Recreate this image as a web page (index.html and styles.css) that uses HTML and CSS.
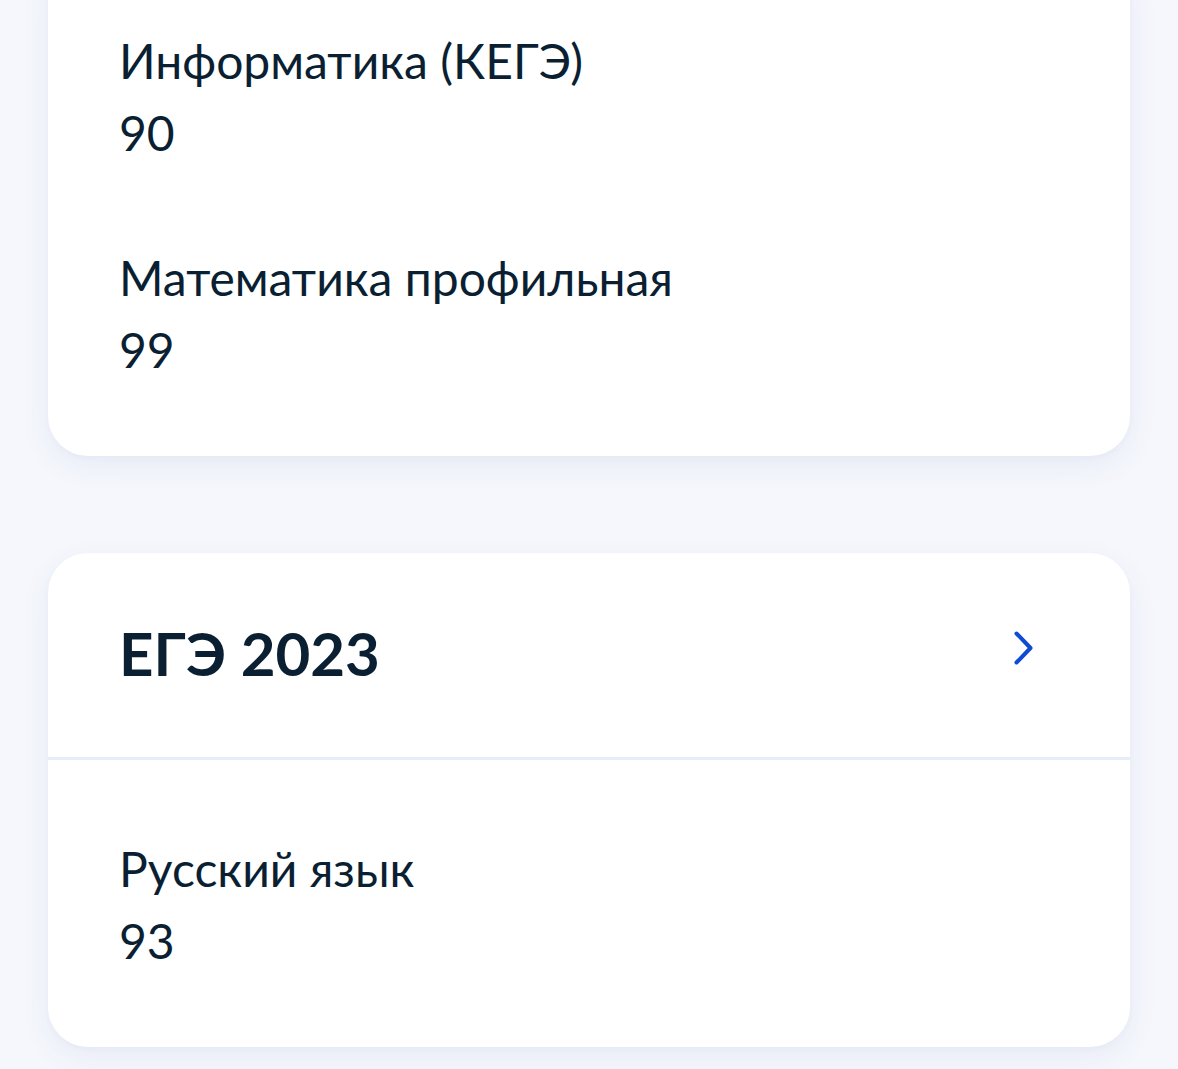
FILE: index.html
```html
<!DOCTYPE html>
<html lang="ru">
<head>
<meta charset="utf-8">
<link rel="stylesheet" href="styles.css">
</head>
<body>
<main class="page">
  <section class="card card-first">
    <div class="card-body">
      <div class="result">
        <div class="subject">Информатика (КЕГЭ)</div>
        <div class="score">90</div>
      </div>
      <div class="result">
        <div class="subject">Математика профильная</div>
        <div class="score">99</div>
      </div>
    </div>
  </section>

  <section class="card">
    <header class="card-head">
      <h2 class="card-title">ЕГЭ 2023</h2>
      <svg class="chevron" width="20" height="34" viewBox="0 0 20 34" aria-hidden="true">
        <path d="M2.5 2.5 L16.5 17 L2.5 31.5" fill="none" stroke="#0d4cd3" stroke-width="4" stroke-linecap="round" stroke-linejoin="round"/>
      </svg>
    </header>
    <div class="card-body">
      <div class="result">
        <div class="subject">Русский язык</div>
        <div class="score">93</div>
      </div>
    </div>
  </section>
</main>
</body>
</html>
```

FILE: styles.css
```css
html, body {
  margin: 0;
  padding: 0;
}

body {
  background: #f5f7fc;
  font-family: Lato, "Noto Sans", sans-serif;
  color: #0b1f33;
  overflow: hidden;
  height: 1069px;
}

.page {
  display: flex;
  flex-direction: column;
  gap: 97px;
  padding: 0 48px;
  margin-top: -48px;
}

.card {
  background: #ffffff;
  border-radius: 40px;
  box-shadow: 0 10px 30px rgba(54, 92, 160, 0.07), 0 2px 6px rgba(54, 92, 160, 0.03);
  overflow: hidden;
}

.card-body {
  display: flex;
  flex-direction: column;
  gap: 73px;
  padding: 73px 71px 70px;
}

.result {
  display: flex;
  flex-direction: column;
}

.subject,
.score {
  font-size: 48px;
  line-height: 72px;
  font-weight: 400;
}

.card-head {
  display: flex;
  align-items: center;
  justify-content: space-between;
  padding: 64px 96px 68px 71px;
  border-bottom: 3px solid #e6ecf8;
}

.card-title {
  margin: 0;
  font-size: 60px;
  line-height: 72px;
  font-weight: 700;
}

.chevron {
  display: block;
  margin-top: -10px;
}
```
